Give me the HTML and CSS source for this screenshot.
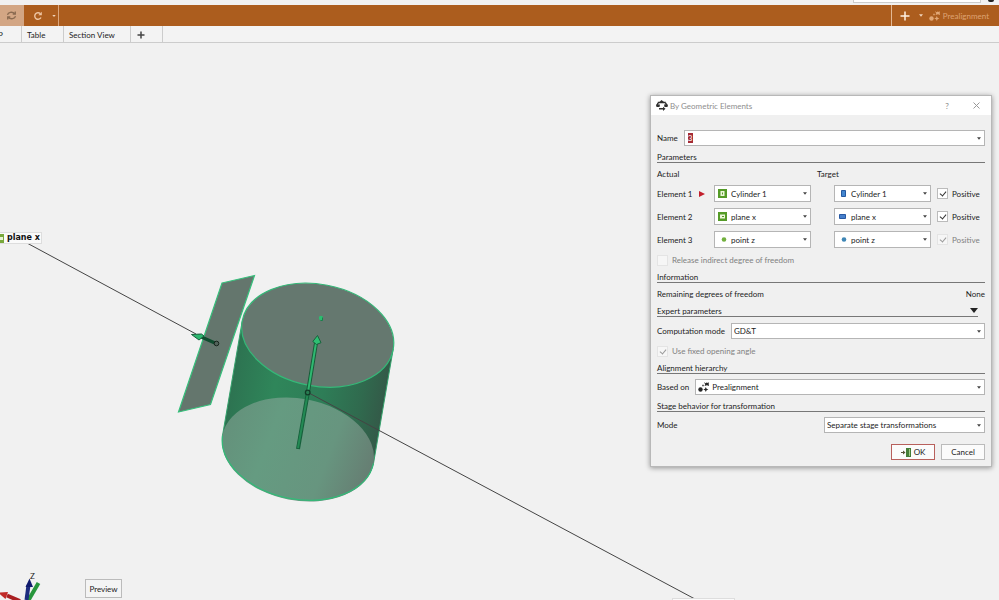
FILE: index.html
```html
<!DOCTYPE html>
<html lang="en">
<head>
<meta charset="utf-8">
<title>By Geometric Elements</title>
<link rel="stylesheet" href="styles.css">
</head>
<body>
<svg class="defs" aria-hidden="true">
  <symbol id="caret" viewBox="0 0 5 3"><path d="M0 0h5L2.500 3z"/></symbol>
  <symbol id="cluster" viewBox="0 0 12 12">
    <circle cx="2.500" cy="8.500" r="2.200"/>
    <path d="M7.800 6l.8 1.700 1.800.8-1.800.8-.8 1.700-.8-1.700-1.800-.8 1.800-.8z"/>
    <path d="M6 1l1.500 1.200L8.700 1.500 10 2l1-1-.3 2L11 5 9 4.300 6.500 5l.7-1.500z"/>
    <path d="M4.300 3.800h1.400v1.400H4.300z"/>
  </symbol>
</svg>

<div class="app">
  <header class="strip">
    <div class="strip-box"></div>
    <div class="strip-dot"></div>
  </header>

  <nav class="toolbar" aria-label="Tools">
    <button class="tool tool-active" aria-label="Recalculate">
      <svg width="11" height="11" viewBox="0 0 11 11"><g fill="none" stroke="#8a6a50" stroke-width="1.300"><path d="M1.500 4.800C2 2.400 6 1 9 3.800M9.300 1.500v2.600H6.700M9.500 6.200C9 8.600 5 10 2 7.200M1.700 9.500V6.900h2.600"/></g></svg>
    </button>
    <button class="tool tool-redo" aria-label="Recalculate options">
      <svg width="10" height="10" viewBox="0 0 10 10"><path d="M8 6.500A3.300 3.300 0 1 1 7.300 2.600" fill="none" stroke="#eec5a3" stroke-width="1.400"/><path d="M5.300 4.200h3.500V.7z" fill="#eec5a3"/></svg>
      <svg class="caret-light" width="4" height="2"><use href="#caret"/></svg>
    </button>
    <div class="spacer"></div>
    <button class="tool tool-add" aria-label="Add alignment">
      <svg width="10" height="10" viewBox="0 0 10 10"><path d="M5 .5v9M.5 5h9" stroke="#fff1e2" stroke-width="1.500"/></svg>
      <svg class="caret-light" width="4" height="3"><use href="#caret"/></svg>
    </button>
    <button class="tool tool-align">
      <svg width="12" height="12" fill="#e2a877"><use href="#cluster"/></svg>
      <span>Prealignment</span>
    </button>
  </nav>

  <nav class="tabs" aria-label="Views">
    <button class="tab tab-cut">P</button>
    <button class="tab tab-table">Table</button>
    <button class="tab tab-section">Section View</button>
    <button class="tab tab-plus" aria-label="Add view"><svg width="8" height="8" viewBox="0 0 8 8"><path d="M4 .5v7M.5 4h7" stroke="#444" stroke-width="1.500"/></svg></button>
  </nav>

  <main class="viewport">
    <svg class="scene" width="999" height="557" viewBox="0 43 999 557" role="img" aria-label="3D view of a cylinder and a plane">
      <defs>
        <linearGradient id="side" gradientUnits="userSpaceOnUse" x1="232" y1="380" x2="383" y2="407">
          <stop offset="0" stop-color="#2d7351"/><stop offset=".28" stop-color="#2f865a"/><stop offset=".6" stop-color="#2e7d57"/><stop offset=".85" stop-color="#306a4e"/><stop offset="1" stop-color="#335a48"/>
        </linearGradient>
        <linearGradient id="base" gradientUnits="userSpaceOnUse" x1="222" y1="436" x2="374" y2="463">
          <stop offset="0" stop-color="#64917b"/><stop offset=".3" stop-color="#659b81"/><stop offset=".7" stop-color="#67957f"/><stop offset="1" stop-color="#667d72"/>
        </linearGradient>
      </defs>
      <path d="M222 283L254.500 275.500 210.500 404.500 178.500 412z" fill="#64766d" stroke="#37c07c" stroke-width="1.200"/>
      <path d="M242.200 321.300L222.500 435.600A76.800 50.900 10.900 0 0 373.500 463.400L393.200 349.100z" fill="url(#side)" stroke="#35a36d"/>
      <ellipse cx="298" cy="449.500" rx="76.800" ry="50.900" transform="rotate(10.900 298 449.500)" fill="url(#base)"/>
      <path d="M222.500 435.600A76.800 50.900 10.900 0 0 373.500 463.400" fill="none" stroke="#34b978" stroke-width="1.300"/>
      <ellipse cx="317.700" cy="335.200" rx="76.800" ry="50.900" transform="rotate(10.900 317.700 335.200)" fill="#65786f" stroke="#35b878" stroke-width="1.200"/>
      <circle cx="321" cy="318" r="2.200" fill="#2dbd70"/><path d="M320.500 320.500h2v-3" fill="none" stroke="#17834b"/>
      <path d="M298 449L308 392" stroke="#165f3b" stroke-width="4"/><path d="M298 448L308 392" stroke="#238a54" stroke-width="2"/>
      <path d="M308 392L316 343" stroke="#185c39" stroke-width="4"/><path d="M308 392L316 343" stroke="#2fb971" stroke-width="2"/>
      <path d="M317.500 335.500l3.500 7.200-4.500 1.800-3.700-3z" fill="#2fbf73" stroke="#17623c"/>
      <path d="M308 392.500L694 598.500" stroke="#444"/>
      <circle cx="307.700" cy="392.500" r="2.300" fill="#287d52" stroke="#133c28" stroke-width="1.300"/>
      <path d="M26 242.500L196 334" stroke="#444"/>
      <path d="M198 335.500L216 343.500" stroke="#104c2f" stroke-width="3.500"/>
      <path d="M191.500 334.500l10-.5 2.500 2-5 4z" fill="#2cb76f" stroke="#165f3b"/>
      <circle cx="216.500" cy="343.500" r="2.300" fill="#52635a" stroke="#17251d"/>
      <path d="M28 601L38.500 583" stroke="#27953b" stroke-width="4"/>
      <path d="M26.500 600L28.500 585" stroke="#1d2c7e" stroke-width="4"/><path d="M29.500 578.500l3.500 8.500h-7.500z" fill="#101b6d"/>
      <path d="M20 601L7 595.500" stroke="#a91f22" stroke-width="4"/><path d="M-2 592.500l10-.5-2.500 7z" fill="#c12a28"/>
    </svg>
    <div class="tag tag-plane"><svg width="9" height="9"><path d="M0 0h9v9H0z" fill="#78a83b"/><path d="M4 3h4v3H4z" fill="#e8f4d7"/></svg><span>plane x</span></div>
    <div class="tag tag-bottom"><svg width="9" height="9"><path d="M0 0h9v9H0z" fill="#708867"/></svg></div>
    <span class="axis">Z</span>
    <button class="btn preview">Preview</button>
  </main>

  <form class="dialog" role="dialog" aria-labelledby="dlg-title">
    <div class="titlebar">
      <svg width="12" height="11" viewBox="0 0 12 11" fill="#303030"><path d="M5.500 0L8 2H7v1H4.500V2h-1z"/><path d="M1.800 2.500h8M2 3L1 6M9.700 3l1 3" stroke="#303030" fill="none" stroke-width="1.500"/><path d="M0 4.500h4L3.500 7h-3zM8 4.500h4l-.5 2.500h-3zM3 8h4V6.700L9.500 8.800 7 11V9.500H3z"/></svg>
      <h1 id="dlg-title">By Geometric Elements</h1>
      <button type="button" class="win-btn" aria-label="Help">?</button>
      <button type="button" class="win-btn" aria-label="Close"><svg width="7" height="7" viewBox="0 0 7 7"><path d="M.5.5l6 6M6.500.5l-6 6" stroke="#999"/></svg></button>
    </div>
    <div class="body">
      <div class="row">
        <label for="name">Name</label>
        <div class="combo"><input id="name" type="text" value="3"><svg class="caret" width="4" height="3"><use href="#caret"/></svg></div>
      </div>
      <h2>Parameters</h2>
      <div class="elements heads"><span class="head-actual">Actual</span><span class="head-target">Target</span></div>
      <div class="elements">
        <label for="a1">Element 1</label>
        <svg width="6" height="6"><path d="M0 0l6 3-6 3z" fill="#c21f2c"/></svg>
        <div class="combo pick"><svg width="9" height="9"><path d="M0 0h9v9H0z" fill="#559b28"/><path d="M2.500 2h4v5h-4z" fill="#edf6da"/><path d="M4 3.500h1v2H4z" fill="#559b28"/></svg><select id="a1"><option>Cylinder 1</option></select><svg class="caret" width="4" height="3"><use href="#caret"/></svg></div>
        <div class="combo pick"><svg width="9" height="9"><path d="M3.500 1.500h4v6h-4z" fill="#4386cf" stroke="#2559a0"/></svg><select aria-label="Target 1"><option>Cylinder 1</option></select><svg class="caret" width="4" height="3"><use href="#caret"/></svg></div>
        <label class="check"><input type="checkbox" checked>Positive</label>

        <label class="wide-label" for="a2">Element 2</label>
        <div class="combo pick"><svg width="9" height="9"><path d="M0 0h9v9H0z" fill="#559b28"/><path d="M2 2.500h5v4H2z" fill="#edf6da"/><path d="M4 4h2v1H4z" fill="#559b28"/></svg><select id="a2"><option>plane x</option></select><svg class="caret" width="4" height="3"><use href="#caret"/></svg></div>
        <div class="combo pick"><svg width="9" height="9"><path d="M1.500 2.500h6v4h-6z" fill="#467fcb" stroke="#2859a3"/></svg><select aria-label="Target 2"><option>plane x</option></select><svg class="caret" width="4" height="3"><use href="#caret"/></svg></div>
        <label class="check"><input type="checkbox" checked>Positive</label>

        <label class="wide-label" for="a3">Element 3</label>
        <div class="combo pick"><svg width="9" height="9"><circle cx="6" cy="4.500" r="2.300" fill="#72b03e"/></svg><select id="a3"><option>point z</option></select><svg class="caret" width="4" height="3"><use href="#caret"/></svg></div>
        <div class="combo pick"><svg width="9" height="9"><circle cx="6" cy="4.500" r="2.300" fill="#3f86b5"/></svg><select aria-label="Target 3"><option>point z</option></select><svg class="caret" width="4" height="3"><use href="#caret"/></svg></div>
        <label class="check off"><input type="checkbox" checked disabled>Positive</label>
      </div>
      <label class="check off line field"><input type="checkbox" disabled>Release indirect degree of freedom</label>
      <h2>Information</h2>
      <div class="line pair"><span>Remaining degrees of freedom</span><span>None</span></div>
      <h2 class="expert">Expert parameters<svg width="8" height="5" fill="#222"><use href="#caret"/></svg></h2>
      <div class="row field">
        <label for="mode">Computation mode</label>
        <div class="combo"><select id="mode"><option>GD&amp;T</option></select><svg class="caret" width="4" height="3"><use href="#caret"/></svg></div>
      </div>
      <label class="check off line field"><input type="checkbox" checked disabled>Use fixed opening angle</label>
      <h2>Alignment hierarchy</h2>
      <div class="row">
        <label for="based">Based on</label>
        <div class="combo"><svg width="12" height="12" fill="#282828"><use href="#cluster"/></svg><select id="based"><option>Prealignment</option></select><svg class="caret" width="4" height="3"><use href="#caret"/></svg></div>
      </div>
      <h2>Stage behavior for transformation</h2>
      <div class="row split">
        <label for="stage">Mode</label>
        <div class="combo"><select id="stage"><option>Separate stage transformations</option></select><svg class="caret" width="4" height="3"><use href="#caret"/></svg></div>
      </div>
      <div class="actions">
        <button type="button" class="btn ok"><svg width="10" height="9" viewBox="0 0 10 9"><path d="M0 4h2V2.500L4.500 4.500 2 6.500V5H0z" fill="#555135"/><path d="M5 0h5v9H5z" fill="#447d37"/><path d="M8 1h1v7H8z" fill="#a1cb86"/></svg>OK</button>
        <button type="button" class="btn">Cancel</button>
      </div>
    </div>
  </form>
</div>
</body>
</html>
```

FILE: styles.css
```css
* { box-sizing: border-box; }
body {
  margin: 0;
  background: #f1f1f1;
  color: #1c1c1c;
  font: 8px/12px Lato, "Open Sans", sans-serif;
}
button, input, select { font: inherit; color: inherit; margin: 0; padding: 0; }
button { background: none; border: 0; }
svg { display: block; flex: none; }
.defs { position: absolute; width: 0; height: 0; }
.app { position: relative; display: flex; flex-direction: column; height: 100vh; overflow: hidden; }

.strip { display: flex; justify-content: flex-end; gap: 7px; height: 5px; padding-right: 5px; flex: none; }
.strip-box { width: 128px; height: 3px; background: #fff; border: 1px solid #ccc; border-top: 0; }
.strip-dot { width: 6px; height: 2px; background: #222; border-radius: 0 0 3px 3px; }

.toolbar { display: flex; height: 21px; background: #ac5d1e; flex: none; }
.tool { display: flex; align-items: center; color: #dea373; }
.tool-active { width: 24px; padding-left: 6px; background: #d3a684; }
.tool-redo { width: 35px; padding-left: 9px; gap: 9px; border-right: 1px solid #dba67d; }
.spacer { flex: 1; }
.tool-add { gap: 9px; padding: 0 6px 0 8px; border-left: 1px solid #e3b894; }
.tool-align { gap: 2px; padding-right: 10px; }
.caret-light { fill: #f1d5bd; }

.tabs { display: flex; height: 17px; border-bottom: 1px solid #ccc; background: #f3f3f3; flex: none; }
.tab { border-right: 1px solid #ccc; text-align: left; padding: 1px 0 0 5px; }
.tab-cut { width: 22px; padding-left: 0; text-indent: -2px; }
.tab-table { width: 42px; }
.tab-section { width: 67px; }
.tab-plus { width: 32px; padding-left: 6px; }

.viewport { position: relative; flex: 1; overflow: hidden; }
.scene { position: absolute; left: 0; top: 0; }
.tag { position: absolute; display: flex; align-items: center; height: 12px; background: #fafafa; border: 1px solid #ddd; }
.tag-plane { left: -6px; top: 189px; gap: 3px; padding-right: 1px; color: #111; font: bold 8px/10px "DejaVu Sans", sans-serif; }
.tag-bottom { left: 672px; bottom: -10px; width: 63px; padding-left: 2px; }
.axis { position: absolute; left: 30px; bottom: 18px; }
.preview { position: absolute; left: 85px; bottom: 2px; width: 37px; height: 19px; }

.btn {
  display: flex; align-items: center; justify-content: center; gap: 3px;
  background: #fbfbfb; border: 1px solid #bbb; color: #222;
}
.viewport .btn { background: #f4f4f4; }

.dialog {
  position: absolute; right: 7px; top: 95px; width: 342px; margin: 0;
  background: #f0f0f0; border: 1px solid #b8b8b8;
  box-shadow: 0 1px 5px rgba(0, 0, 0, .4);
}
.titlebar { display: flex; align-items: center; height: 19px; padding: 0 3px 0 5px; background: #fff; }
h1, h2 { margin: 0; font-size: 8px; line-height: 12px; font-weight: normal; }
h1 { flex: 1; padding-left: 2px; color: #8e8e8e; }
.win-btn { display: flex; align-items: center; justify-content: center; width: 24px; height: 16px; margin-left: 5px; color: #888; }

.body { display: flex; flex-direction: column; gap: 5px; padding: 15px 6px 6px; }
.row { display: flex; align-items: center; gap: 6px; }
.row .combo { flex: 1; height: 16px; }
.row.split { justify-content: space-between; }
.row.split .combo { flex: none; width: 161px; }
.field { margin-top: 1px; }
h2 { display: flex; height: 12px; border-bottom: 1px solid #777; }
.expert { align-items: center; justify-content: space-between; margin-right: 7px; }
.line { height: 12px; }
.pair { display: flex; justify-content: space-between; }

.elements {
  display: grid; align-items: center; gap: 6px 0;
  grid-template-columns: 42px 15px 120px 103px 1fr;
  grid-auto-rows: 17px;
}
.heads { grid-auto-rows: 12px; }
.head-actual { grid-column: 1 / 3; }
.head-target { grid-column: 3 / 6; padding-left: 103px; }
.wide-label { grid-column: 1 / 3; }

.combo { display: flex; align-items: center; min-width: 0; padding: 0 3px 0 2px; background: #fff; border: 1px solid #b5b5b5; }
.combo select, .combo input { flex: 1; min-width: 0; height: 12px; line-height: 12px; border: 0; outline: 0; background: transparent; appearance: none; }
.combo svg + select { padding-left: 2px; }
.pick { width: 97px; height: 17px; padding-left: 3px; }
.pick svg + select { padding-left: 4px; }
.caret { fill: #444; }
#name { flex: none; width: 5px; height: 10px; margin: 0 auto 0 1px; line-height: 10px; background: #a52b35; color: #fff; }

.check { display: flex; align-items: center; gap: 4px; }
.check input {
  appearance: none; position: relative; width: 11px; height: 11px;
  background: #fff; border: 1px solid #bbb; flex: none;
}
.check input:checked::after {
  content: ""; position: absolute; left: 3px; top: 1px; width: 3px; height: 5px;
  border: solid #333; border-width: 0 1px 1px 0; transform: rotate(40deg);
}
.off { color: #808080; }
.check.off input { border-color: #e4e4e4; background: #f6f6f6; }
.check.off input:checked::after { border-color: #999; }

.actions { display: flex; justify-content: flex-end; gap: 6px; margin-top: 6px; }
.actions .btn { width: 44px; height: 16px; }
.actions .ok { border-color: #b8605c; }
```
